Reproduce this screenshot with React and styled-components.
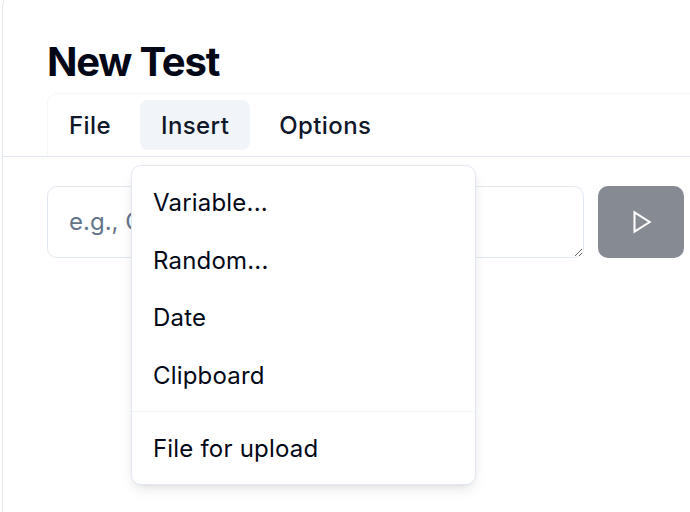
import React from "react";
import styled, { createGlobalStyle } from "styled-components";

const GlobalStyle = createGlobalStyle`
  html, body {
    margin: 0;
    padding: 0;
    background: #ffffff;
    overflow: hidden;
  }
  body {
    font-family: Inter, "Noto Sans", sans-serif;
    color: #020817;
  }
  * {
    box-sizing: border-box;
  }
`;

const Card = styled.div`
  margin: -6px 0 0 2px;
  width: 740px;
  min-height: 540px;
  background: #ffffff;
  border: 1px solid #e2e8f0;
  border-radius: 12px;
`;

const Header = styled.div`
  padding: 43px 0 0 44px;
  border-bottom: 1px solid #e2e8f0;
  display: flex;
  flex-direction: column;
  gap: 7px;
`;

const Title = styled.h1`
  margin: 0;
  font-size: 40px;
  line-height: 48px;
  font-weight: 700;
  letter-spacing: -0.03em;
  color: #020817;
`;

const Menubar = styled.div`
  display: flex;
  align-items: center;
  gap: 8px;
  padding: 6px 0;
  background: #ffffff;
  border: 1px solid #f4f6f9;
  border-bottom: none;
  border-right: none;
  border-radius: 10px 0 0 0;
  height: 63px;
`;

const MenuSlot = styled.div`
  position: relative;
`;

const MenuTrigger = styled.button`
  all: unset;
  display: flex;
  align-items: center;
  height: 50px;
  padding: 0 21px;
  border-radius: 8px;
  font-family: Inter, "Noto Sans", sans-serif;
  font-size: 24px;
  font-weight: 500;
  letter-spacing: 0.4px;
  color: #0f172a;
  background: ${(p) => (p.$open ? "#f1f5f9" : "transparent")};
  cursor: default;
`;

const Dropdown = styled.div`
  position: absolute;
  top: calc(100% + 15px);
  left: -9px;
  width: 345px;
  padding: 8px 6px 6px;
  background: #ffffff;
  border: 1px solid #e2e8f0;
  border-radius: 10px;
  box-shadow: 0 6px 14px -3px rgba(15, 23, 42, 0.12),
    0 3px 6px -4px rgba(15, 23, 42, 0.1);
  z-index: 10;
`;

const DropItem = styled.div`
  padding: 12px 15px;
  line-height: 33.5px;
  font-size: 24px;
  font-weight: 400;
  letter-spacing: 0.2px;
  color: #020817;
  border-radius: 6px;
`;

const Separator = styled.div`
  height: 1px;
  background: #f1f5f9;
  margin: 7px -6px 8px;
`;

const Body = styled.div`
  padding: 29px 0 0 44px;
`;

const InputRow = styled.div`
  display: flex;
  gap: 14px;
  align-items: stretch;
`;

const Prompt = styled.textarea`
  width: 537px;
  height: 72px;
  min-height: 72px;
  padding: 17px 21px;
  border: 1px solid #e2e8f0;
  border-radius: 10px;
  font-family: Inter, "Noto Sans", sans-serif;
  font-size: 24px;
  line-height: 36px;
  color: #020817;
  background: #ffffff;
  outline: none;
  resize: vertical;
  &::placeholder {
    color: #64748b;
  }
`;

const RunButton = styled.button`
  width: 86px;
  height: 72px;
  border: none;
  border-radius: 10px;
  background: #0f172a;
  opacity: 0.5;
  display: flex;
  align-items: center;
  justify-content: center;
  padding: 0;
`;

const PlayIcon = () => (
  <svg width="26" height="26" viewBox="0 0 24 24" fill="none">
    <polygon
      points="6 3.2 20 12 6 20.8"
      stroke="#ffffff"
      strokeWidth="1.9"
      strokeLinejoin="miter"
    />
  </svg>
);

const insertItems = ["Variable...", "Random...", "Date", "Clipboard"];

export default function App() {
  return (
    <>
      <GlobalStyle />
      <Card>
        <Header>
          <Title>New Test</Title>
          <Menubar>
            <MenuSlot>
              <MenuTrigger>File</MenuTrigger>
            </MenuSlot>
            <MenuSlot>
              <MenuTrigger $open>Insert</MenuTrigger>
              <Dropdown>
                {insertItems.map((item) => (
                  <DropItem key={item}>{item}</DropItem>
                ))}
                <Separator />
                <DropItem>File for upload</DropItem>
              </Dropdown>
            </MenuSlot>
            <MenuSlot>
              <MenuTrigger>Options</MenuTrigger>
            </MenuSlot>
          </Menubar>
        </Header>
        <Body>
          <InputRow>
            <Prompt placeholder="e.g., Check the login page" />
            <RunButton aria-label="Run">
              <PlayIcon />
            </RunButton>
          </InputRow>
        </Body>
      </Card>
    </>
  );
}
